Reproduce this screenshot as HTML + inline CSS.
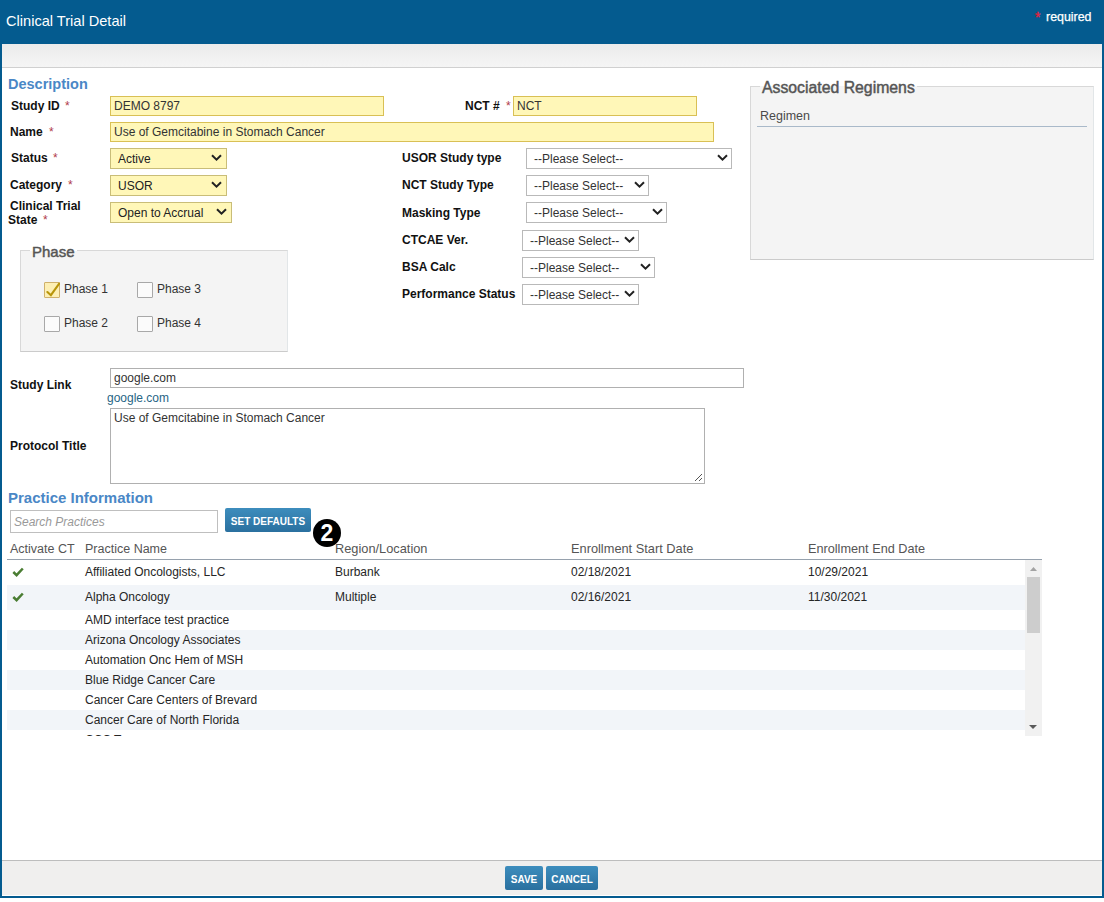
<!DOCTYPE html>
<html><head><meta charset="utf-8">
<style>
*{box-sizing:border-box}
html,body{margin:0;padding:0}
body{width:1104px;height:902px;position:relative;overflow:hidden;background:#fff;font-family:"Liberation Sans",sans-serif;font-size:12px;color:#222}
.a{position:absolute;white-space:nowrap}
#frame{position:absolute;left:0;top:0;width:1104px;height:898px;background:#045b8f}
#inner{position:absolute;left:2px;top:44px;width:1100px;height:852px;background:#fff}
#title{left:6px;top:13px;font-size:14.6px;color:#fff}
#req{left:1046px;top:10px;font-size:12.4px;color:#fff;-webkit-text-stroke:0.25px #fff}
#req span{position:absolute;left:-11px;top:-1px;font-size:14px;color:#e8203a;-webkit-text-stroke:0.3px #e8203a}
#toolbar{left:2px;top:44px;width:1100px;height:24px;background:linear-gradient(#ebebeb,#f5f5f5);border-bottom:1px solid #d0d0d0}
#footer{left:2px;top:860px;width:1100px;height:35px;background:#f0efee;border-top:1px solid #bdbdbd}
.h{color:#4a87c6;font-weight:bold;font-size:14.5px}
.lbl{font-weight:bold;font-size:12px;color:#111}
.ast{color:#b03a4a;font-size:12px}
.inp{position:absolute;background:#fff7b8;border:1px solid #d9c055;font-size:12px;color:#333;padding-left:3px;line-height:18px}
.sel{position:absolute;background:#fff7b8;border:1px solid #c9bd78;font-size:12px;color:#222;padding-left:7px;padding-top:1px;line-height:19px}
.wsel{position:absolute;background:#fff;border:1px solid #b9b9b9;font-size:12px;color:#333;padding-left:7px;line-height:20px}
.chev{position:absolute;top:5px;right:4px;width:11px;height:7px}
.wsel .chev{right:3px;top:5px}
.fs{position:absolute;background:#f4f4f4;border:1px solid #d8d8d8;border-right-color:#e2e6e8;border-bottom-color:#cbcbcb}
.leg{position:absolute;font-weight:normal;-webkit-text-stroke:0.45px #555;color:#555;background:transparent}
.cb{position:absolute;width:16px;height:16px;border:1px solid #a8a8a8;background:#fbfbfb;border-radius:1px}
.cbt{font-size:12px;color:#333}
.btn{position:absolute;background:linear-gradient(#3d8dbd,#2a709f);border-radius:2px;color:#fff;font-weight:bold;font-size:10px;text-align:center}
.th{font-size:12.5px;color:#555}
.td{font-size:12px;color:#262626}
.row{position:absolute;left:8px;width:1018px}
.alt{background:#f2f5f9}
</style></head><body>
<div id="frame"></div>
<div id="inner"></div>
<div class="a" id="title">Clinical Trial Detail</div>
<div class="a" id="req"><span>*</span>required</div>
<div class="a" id="toolbar"></div>

<!-- Description -->
<div class="a h" style="left:8px;top:76px">Description</div>

<div class="a lbl" style="left:11px;top:99px">Study ID</div><div class="a ast" style="left:65px;top:99px">*</div>
<div class="inp" style="left:110px;top:96px;width:274px;height:20px">DEMO 8797</div>
<div class="a lbl" style="left:465px;top:99px">NCT #</div><div class="a ast" style="left:506px;top:99px">*</div>
<div class="inp" style="left:513px;top:96px;width:184px;height:20px">NCT</div>

<div class="a lbl" style="left:10px;top:125px">Name</div><div class="a ast" style="left:49px;top:125px">*</div>
<div class="inp" style="left:110px;top:122px;width:604px;height:20px">Use of Gemcitabine in Stomach Cancer</div>

<div class="a lbl" style="left:11px;top:151px">Status</div><div class="a ast" style="left:53px;top:151px">*</div>
<div class="sel" style="left:110px;top:148px;width:117px;height:21px">Active<svg class="chev" viewBox="0 0 11 7"><path d="M1 1.2 L5.5 5.6 L10 1.2" fill="none" stroke="#222" stroke-width="2"/></svg></div>

<div class="a lbl" style="left:10px;top:178px">Category</div><div class="a ast" style="left:68px;top:178px">*</div>
<div class="sel" style="left:110px;top:175px;width:117px;height:21px">USOR<svg class="chev" viewBox="0 0 11 7"><path d="M1 1.2 L5.5 5.6 L10 1.2" fill="none" stroke="#222" stroke-width="2"/></svg></div>

<div class="a lbl" style="left:10px;top:199px">Clinical Trial</div>
<div class="a lbl" style="left:8px;top:213px">State</div><div class="a ast" style="left:43px;top:213px">*</div>
<div class="sel" style="left:110px;top:202px;width:122px;height:21px">Open to Accrual<svg class="chev" viewBox="0 0 11 7"><path d="M1 1.2 L5.5 5.6 L10 1.2" fill="none" stroke="#222" stroke-width="2"/></svg></div>

<div class="a lbl" style="left:402px;top:151px">USOR Study type</div>
<div class="wsel" style="left:526px;top:148px;width:206px;height:21px">--Please Select--<svg class="chev" viewBox="0 0 11 7"><path d="M1 1.2 L5.5 5.6 L10 1.2" fill="none" stroke="#222" stroke-width="2"/></svg></div>
<div class="a lbl" style="left:402px;top:178px">NCT Study Type</div>
<div class="wsel" style="left:526px;top:175px;width:123px;height:21px">--Please Select--<svg class="chev" viewBox="0 0 11 7"><path d="M1 1.2 L5.5 5.6 L10 1.2" fill="none" stroke="#222" stroke-width="2"/></svg></div>
<div class="a lbl" style="left:402px;top:206px">Masking Type</div>
<div class="wsel" style="left:526px;top:202px;width:141px;height:21px">--Please Select--<svg class="chev" viewBox="0 0 11 7"><path d="M1 1.2 L5.5 5.6 L10 1.2" fill="none" stroke="#222" stroke-width="2"/></svg></div>
<div class="a lbl" style="left:402px;top:233px">CTCAE Ver.</div>
<div class="wsel" style="left:522px;top:230px;width:117px;height:21px">--Please Select--<svg class="chev" viewBox="0 0 11 7"><path d="M1 1.2 L5.5 5.6 L10 1.2" fill="none" stroke="#222" stroke-width="2"/></svg></div>
<div class="a lbl" style="left:402px;top:260px">BSA Calc</div>
<div class="wsel" style="left:522px;top:257px;width:133px;height:21px">--Please Select--<svg class="chev" viewBox="0 0 11 7"><path d="M1 1.2 L5.5 5.6 L10 1.2" fill="none" stroke="#222" stroke-width="2"/></svg></div>
<div class="a lbl" style="left:402px;top:287px">Performance Status</div>
<div class="wsel" style="left:522px;top:284px;width:117px;height:21px">--Please Select--<svg class="chev" viewBox="0 0 11 7"><path d="M1 1.2 L5.5 5.6 L10 1.2" fill="none" stroke="#222" stroke-width="2"/></svg></div>

<!-- Phase -->
<div class="fs" style="left:20px;top:250px;width:268px;height:102px"></div>
<div class="a leg" style="left:30px;top:243px;font-size:15px;padding:0 2px;background:linear-gradient(#fff 0,#fff 8px,#f4f4f4 8px)">Phase</div>
<div class="cb" style="left:44px;top:282px;background:#fdefb4;border-color:#cfb06a"><svg style="position:absolute;left:-1px;top:-1px" width="16" height="16" viewBox="0 0 16 16"><path d="M3.4 10 L6.9 13.2 L15.2 1.6" fill="none" stroke="#b8950a" stroke-width="2.1" stroke-linecap="round"/></svg></div>
<div class="a cbt" style="left:64px;top:282px">Phase 1</div>
<div class="cb" style="left:137px;top:282px"></div>
<div class="a cbt" style="left:157px;top:282px">Phase 3</div>
<div class="cb" style="left:44px;top:316px"></div>
<div class="a cbt" style="left:64px;top:316px">Phase 2</div>
<div class="cb" style="left:137px;top:316px"></div>
<div class="a cbt" style="left:157px;top:316px">Phase 4</div>

<!-- Associated Regimens -->
<div class="fs" style="left:750px;top:86px;width:344px;height:174px"></div>
<div class="a leg" style="left:760px;top:79px;font-size:15.8px;padding:0 2px;background:linear-gradient(#fff 0,#fff 7px,#f4f4f4 7px)">Associated Regimens</div>
<div class="a" style="left:760px;top:109px;font-size:12.5px;color:#4a4a4a">Regimen</div>
<div class="a" style="left:757px;top:126px;width:330px;height:1px;background:#a9b9c9"></div>

<!-- Study link -->
<div class="a lbl" style="left:10px;top:378px">Study Link</div>
<div class="inp" style="left:110px;top:368px;width:634px;height:20px;background:#fff;border-color:#b0b0b0">google.com</div>
<div class="a" style="left:107px;top:391px;color:#276585">google.com</div>
<div class="a lbl" style="left:10px;top:439px">Protocol Title</div>
<div class="inp" style="left:110px;top:408px;width:595px;height:76px;background:#fff;border-color:#b0b0b0;line-height:18px">Use of Gemcitabine in Stomach Cancer
<svg style="position:absolute;right:1px;bottom:1px" width="9" height="9" viewBox="0 0 9 9"><path d="M8 1 L1 8 M8 5 L5 8" stroke="#555" stroke-width="1"/></svg></div>

<!-- Practice Information -->
<div class="a h" style="left:8px;top:489px;font-size:15px">Practice Information</div>
<div class="inp" style="left:10px;top:510px;width:208px;height:23px;background:#fff;border-color:#bfbfbf;line-height:23px;font-style:italic;color:#999">Search Practices</div>
<div class="btn" style="left:225px;top:508px;width:86px;height:24px;line-height:27px">SET DEFAULTS</div>
<div class="a" style="left:313px;top:519px;width:28px;height:28px;border-radius:50%;background:#000;color:#fff;font-weight:bold;font-size:23px;text-align:center;line-height:29px">2</div>

<div class="a th" style="left:10px;top:542px">Activate CT</div>
<div class="a th" style="left:85px;top:542px">Practice Name</div>
<div class="a th" style="left:335px;top:541px;font-size:12.8px">Region/Location</div>
<div class="a th" style="left:571px;top:541px;font-size:12.8px">Enrollment Start Date</div>
<div class="a th" style="left:808px;top:542px;font-size:12.7px">Enrollment End Date</div>
<div class="a" style="left:7px;top:559px;width:1035px;height:1px;background:#96a1ad"></div>

<div class="a" style="left:7px;top:560px;width:1035px;height:176px;overflow:hidden">
 <div class="row" style="left:0;top:0;height:25px"></div>
 <div class="row alt" style="left:0;top:25px;height:25px"></div>
 <div class="row" style="left:0;top:50px;height:20px"></div>
 <div class="row alt" style="left:0;top:70px;height:20px"></div>
 <div class="row" style="left:0;top:90px;height:20px"></div>
 <div class="row alt" style="left:0;top:110px;height:20px"></div>
 <div class="row" style="left:0;top:130px;height:20px"></div>
 <div class="row alt" style="left:0;top:150px;height:20px"></div>
 <svg class="a" style="left:5px;top:7px" width="12" height="10" viewBox="0 0 12 10"><path d="M1.3 5 L4.6 8.2 L10.8 1.5" fill="none" stroke="#4a7d33" stroke-width="2.5"/></svg>
 <svg class="a" style="left:5px;top:32px" width="12" height="10" viewBox="0 0 12 10"><path d="M1.3 5 L4.6 8.2 L10.8 1.5" fill="none" stroke="#4a7d33" stroke-width="2.5"/></svg>
 <div class="a td" style="left:78px;top:5px">Affiliated Oncologists, LLC</div>
 <div class="a td" style="left:328px;top:5px">Burbank</div>
 <div class="a td" style="left:564px;top:5px">02/18/2021</div>
 <div class="a td" style="left:801px;top:5px">10/29/2021</div>
 <div class="a td" style="left:78px;top:30px">Alpha Oncology</div>
 <div class="a td" style="left:328px;top:30px">Multiple</div>
 <div class="a td" style="left:564px;top:30px">02/16/2021</div>
 <div class="a td" style="left:801px;top:30px">11/30/2021</div>
 <div class="a td" style="left:78px;top:53px">AMD interface test practice</div>
 <div class="a td" style="left:78px;top:73px">Arizona Oncology Associates</div>
 <div class="a td" style="left:78px;top:93px">Automation Onc Hem of MSH</div>
 <div class="a td" style="left:78px;top:113px">Blue Ridge Cancer Care</div>
 <div class="a td" style="left:78px;top:133px">Cancer Care Centers of Brevard</div>
 <div class="a td" style="left:78px;top:153px">Cancer Care of North Florida</div>
 <div class="a td" style="left:78px;top:173px">CCC Tucson</div>
 <!-- scrollbar -->
 <div class="a" style="left:1018px;top:0;width:17px;height:176px;background:#f1f1f1"></div>
 <div class="a" style="left:1020px;top:17px;width:13px;height:56px;background:#cdcdcd"></div>
 <svg class="a" style="left:1023px;top:7px" width="7" height="4" viewBox="0 0 7 4"><path d="M0 4 L3.5 0 L7 4Z" fill="#a3a3a3"/></svg>
 <svg class="a" style="left:1022px;top:165px" width="8" height="4" viewBox="0 0 8 4"><path d="M0 0 L4 4 L8 0Z" fill="#5a5a5a"/></svg>
</div>

<!-- footer -->
<div class="a" id="footer"></div>
<div class="btn" style="left:505px;top:866px;width:38px;height:24px;line-height:27px">SAVE</div>
<div class="btn" style="left:546px;top:866px;width:52px;height:24px;line-height:27px">CANCEL</div>
</body></html>
